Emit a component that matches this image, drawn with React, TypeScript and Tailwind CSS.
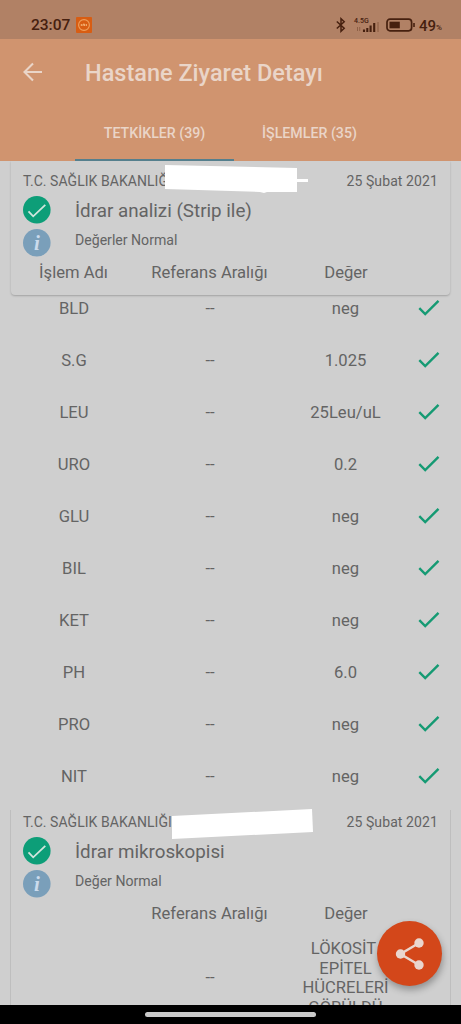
import React from "react";

type Result = {
  name: string;
  range: string;
  value: string;
};

const urineResults: Result[] = [
  { name: "BLD", range: "--", value: "neg" },
  { name: "S.G", range: "--", value: "1.025" },
  { name: "LEU", range: "--", value: "25Leu/uL" },
  { name: "URO", range: "--", value: "0.2" },
  { name: "GLU", range: "--", value: "neg" },
  { name: "BIL", range: "--", value: "neg" },
  { name: "KET", range: "--", value: "neg" },
  { name: "PH", range: "--", value: "6.0" },
  { name: "PRO", range: "--", value: "neg" },
  { name: "NIT", range: "--", value: "neg" },
];

function StatusBar() {
  return (
    <div className="flex h-[39px] shrink-0 items-center bg-[#b18165] pt-[11px] pr-[19px] pl-[31px] text-[#46200f]">
      <span className="w-[45px] pt-[2px] text-[15.5px] leading-none font-medium">
        23:07
      </span>
      <svg className="h-4 w-4" viewBox="0 0 16 16" fill="none">
        <rect width="16" height="16" rx="1" fill="#d85d13" />
        <circle cx="8" cy="8" r="5.4" stroke="#efa05c" strokeWidth="1.1" />
        <path d="M5.3 7v2M7 9V7.2h1.6V9M10.3 7v2" stroke="#f5b87b" />
      </svg>

      <div className="ml-auto flex items-center">
        <svg className="h-4 w-3" viewBox="0 0 12 16" fill="none">
          <path
            d="M1.8 4.5l7.4 6.8L6 14.3V1.7l3.2 3L1.8 11.5"
            stroke="currentColor"
            strokeWidth="1.5"
          />
        </svg>
        <div className="ml-[7px] flex w-[27px] flex-col">
          <span className="text-[7px] leading-[6px] font-medium">4.5G</span>
          <svg className="h-2 w-[27px] overflow-visible" viewBox="0 0 27 8" fill="none">
            <path d="M3.5 3v4M5.7 3v4" stroke="#85583f" strokeWidth="0.8" />
            <path
              d="M10 8V5.5M13.3 8V4M16.6 8V1.5M20.2 8V-1"
              stroke="currentColor"
              strokeWidth="2.1"
            />
            <path d="M24 8V-2" stroke="#99694e" strokeWidth="1.6" />
          </svg>
        </div>
        <svg className="ml-[5px] h-[14px] w-[29px]" viewBox="0 0 29 14" fill="none">
          <rect
            x="1"
            y="1.2"
            width="24.6"
            height="11.6"
            rx="3"
            stroke="currentColor"
            strokeWidth="1.7"
          />
          <rect x="3.5" y="3.7" width="10.3" height="6.6" fill="currentColor" />
          <path d="M28 5v4" stroke="currentColor" strokeWidth="1.6" />
        </svg>
        <span className="ml-[4px] pt-[2px] text-[15px] leading-none font-medium">
          49
        </span>
        <span className="mt-[6px] text-[8px] leading-none font-medium">%</span>
      </div>
    </div>
  );
}

function Header() {
  return (
    <header className="h-[122px] shrink-0 bg-[#d0946f] text-[#ead5c8]">
      <div className="flex h-[68px] items-center pl-[22px]">
        <svg className="-mt-[3px] h-[22px] w-[22px]" viewBox="0 0 22 22" fill="none">
          <path
            d="M20 11H3M11 2.5L2.5 11l8.5 8.5"
            stroke="currentColor"
            strokeWidth="2.1"
          />
        </svg>
        <h1 className="ml-[41px] pt-[2px] text-[23.5px] font-medium whitespace-nowrap">
          Hastane Ziyaret Detayı
        </h1>
      </div>
      <div className="flex h-[54px] pl-[75px] text-[14.2px] font-medium whitespace-nowrap">
        <div className="flex w-[159px] justify-center border-b-2 border-[#557f8d] pt-[16px]">
          TETKİKLER (39)
        </div>
        <div className="flex w-[151px] justify-center pt-[16px]">İŞLEMLER (35)</div>
      </div>
    </header>
  );
}

function StatusIcons() {
  return (
    <div className="flex w-[28px] flex-col gap-[5px] pt-px">
      <svg className="h-7 w-7" viewBox="0 0 28 28" fill="none">
        <circle cx="13.8" cy="13.8" r="13.8" fill="#0d9e78" />
        <path d="M5.5 15.3l4.7 5L22.3 8.8" stroke="#d1e5dd" strokeWidth="1.8" />
      </svg>
      <svg className="h-7 w-7" viewBox="0 0 28 28">
        <circle cx="13.8" cy="13.8" r="13.8" fill="#7a9fba" />
        <text
          x="14"
          y="21"
          textAnchor="middle"
          fontFamily="Liberation Serif, serif"
          fontSize="21"
          fontStyle="italic"
          fontWeight="700"
          fill="#cbdbed"
        >
          i
        </text>
      </svg>
    </div>
  );
}

type CardHeadProps = {
  title: string;
  note: string;
  institution: string;
  nameLabel: string;
  mask: React.ReactNode;
};

function CardHead({ title, note, institution, nameLabel, mask }: CardHeadProps) {
  return (
    <>
      <div className="relative flex h-[24px] items-center justify-between pr-[12px] pl-[12px] text-[14px] whitespace-nowrap">
        <span className="tracking-[0.05px]">{institution}</span>
        <span className="tracking-[0.1px]">25 Şubat 2021</span>
        {mask}
      </div>
      <div className="flex h-[68px] pt-[2px] pl-[12px]">
        <StatusIcons />
        <div className="ml-[24px] pt-[3px]">
          <div className="text-[18.8px] leading-[26px]">{title}</div>
          <div className="mt-[6px] text-[14.1px] leading-[20px]">{note}</div>
        </div>
      </div>
      <div className="-ml-[5px] flex text-[16.6px] leading-[24px]">
        <div className="w-[135px] text-center">{nameLabel}</div>
        <div className="w-[137px] text-center">Referans Aralığı</div>
        <div className="w-[136px] text-center">Değer</div>
      </div>
    </>
  );
}

function ResultRow({ name, range, value }: Result) {
  return (
    <div className="flex h-[52px] items-center pl-[6px] text-[16.6px]">
      <div className="w-[136px] pt-px text-center">{name}</div>
      <div className="w-[136px] pt-px text-center">{range}</div>
      <div className="w-[135px] pt-px text-center">{value}</div>
      <svg className="-mt-[2px] ml-[5px] h-[18px] w-[22px]" viewBox="0 0 22 18" fill="none">
        <path d="M1.3 9.2l5.9 5.8L20.5 1.8" stroke="#159a73" strokeWidth="2.4" />
      </svg>
    </div>
  );
}

export default function App() {
  return (
    <div className="relative flex h-[1024px] w-[461px] flex-col overflow-hidden bg-[#cfcfcf] font-['Roboto',sans-serif] text-[#646464]">
      <StatusBar />
      <Header />

      <main className="min-h-0 flex-1 overflow-hidden">
        <section className="mx-[11px] h-[134px] rounded-b-[4px] pt-[8px] shadow-[0_1px_2px_rgba(0,0,0,0.22)]">
          <CardHead
            title="İdrar analizi (Strip ile)"
            note="Değerler Normal"
            institution="T.C. SAĞLIK BAKANLIĞI"
            nameLabel="İşlem Adı"
            mask={
              <svg
                className="absolute top-[-5px] left-[153px] h-[30px] w-[145px]"
                viewBox="0 0 145 30"
              >
                <path
                  d="M1 1L133 4v11h11v3h-11v10h-30l-3 1-4-1L1 25z"
                  fill="#fff"
                />
              </svg>
            }
          />
        </section>

        <div className="-mt-[12px]">
          {urineResults.map((result) => (
            <ResultRow key={result.name} {...result} />
          ))}
        </div>

        <section className="mx-[10px] mt-[7px] h-[220px] border-x border-[#bebebe]">
          <CardHead
            title="İdrar mikroskopisi"
            note="Değer Normal"
            institution="T.C. SAĞLIK BAKANLIĞI"
            nameLabel=""
            mask={
              <svg
                className="absolute top-[-2px] left-[160px] h-[32px] w-[144px]"
                viewBox="0 0 144 32"
              >
                <path d="M1 8L141 1l1 23L1 31z" fill="#fff" />
              </svg>
            }
          />
          <div className="mt-[13px] -ml-[5px] flex items-center text-[16.6px] leading-[19.5px]">
            <div className="w-[136px]" />
            <div className="w-[136px] text-center">--</div>
            <div className="w-[135px] text-center">
              LÖKOSİT{"\u00a0"}
              <br />
              EPİTEL
              <br />
              HÜCRELERİ
              <br />
              GÖRÜLDÜ
            </div>
          </div>
        </section>
      </main>

      <button
        aria-label="Paylaş"
        className="absolute right-[19px] bottom-[38px] flex h-[65px] w-[65px] items-center justify-center rounded-full bg-[#d3471a] shadow-[1px_4px_7px_rgba(0,0,0,0.3)]"
      >
        <svg className="h-[32px] w-[30px]" viewBox="0 0 30 32" fill="none">
          <path d="M24 5L5.500 16L24 27" stroke="#ead6ce" strokeWidth="2.5" />
          <circle cx="24" cy="5" r="4.7" fill="#ead6ce" />
          <circle cx="5.5" cy="16" r="4.7" fill="#ead6ce" />
          <circle cx="24" cy="27" r="4.7" fill="#ead6ce" />
        </svg>
      </button>

      <nav className="flex h-[19px] shrink-0 justify-center bg-black pt-[7px]">
        <div className="h-[5px] w-[171px] rounded-full bg-[#cacaca]" />
      </nav>
    </div>
  );
}
